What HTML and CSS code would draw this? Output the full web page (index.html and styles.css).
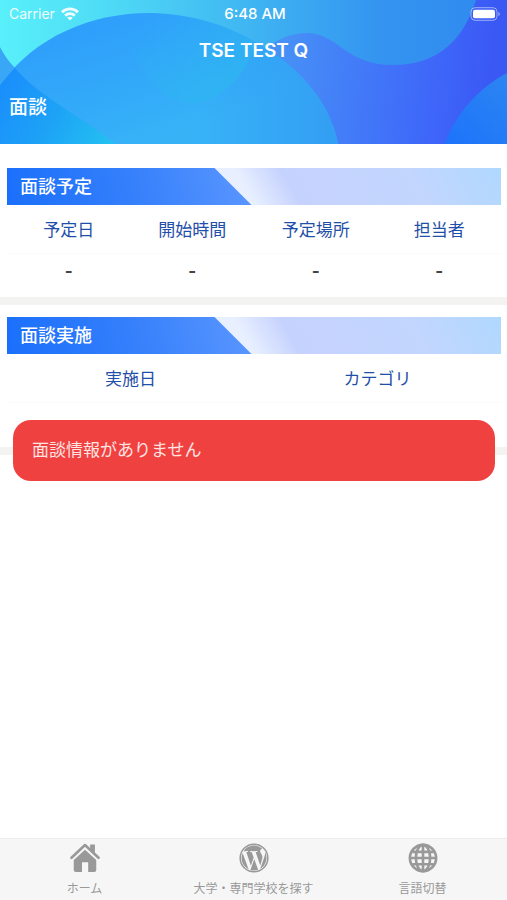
FILE: index.html
```
<!DOCTYPE html>
<html lang="ja">
<head>
    <meta charset="utf-8">
    <meta name="viewport" content="width=device-width, initial-scale=1">
    <title>面談 - TSE TEST Q</title>
    <link rel="stylesheet" href="styles.css">
</head>
<body>
    <header class="app-header">
        <!-- Wave background -->
        <svg class="header-bg" viewBox="0 0 507 144" preserveAspectRatio="none" aria-hidden="true">
            <defs>
                <linearGradient id="bgBase" x1="0" y1="0" x2="507" y2="0" gradientUnits="userSpaceOnUse">
                    <stop offset="0" stop-color="#58f0fa"/><stop offset="0.2" stop-color="#4fdcf6"/>
                    <stop offset="0.5" stop-color="#3fb4f2"/><stop offset="0.75" stop-color="#3494f0"/><stop offset="1" stop-color="#2f88ee"/>
                </linearGradient>
                <linearGradient id="bgHill" x1="100" y1="20" x2="140" y2="144" gradientUnits="userSpaceOnUse">
                    <stop offset="0" stop-color="#2e9ffb"/><stop offset="1" stop-color="#37b2f7"/>
                </linearGradient>
                <linearGradient id="bgFade" x1="200" y1="0" x2="330" y2="0" gradientUnits="userSpaceOnUse">
                    <stop offset="0" stop-color="#339ff4" stop-opacity="0"/><stop offset="1" stop-color="#339ff4"/>
                </linearGradient>
                <linearGradient id="bgGlow" x1="140" y1="30" x2="220" y2="110" gradientUnits="userSpaceOnUse">
                    <stop offset="0" stop-color="#2cb4f0" stop-opacity="0"/><stop offset="1" stop-color="#2cb8f0" stop-opacity="0.7"/>
                </linearGradient>
                <linearGradient id="bgCorner" x1="0" y1="80" x2="110" y2="144" gradientUnits="userSpaceOnUse">
                    <stop offset="0" stop-color="#1a8dfc"/><stop offset="0.5" stop-color="#1da2f6"/><stop offset="1" stop-color="#24c0f1"/>
                </linearGradient>
                <linearGradient id="bgWave" x1="280" y1="60" x2="490" y2="80" gradientUnits="userSpaceOnUse">
                    <stop offset="0" stop-color="#4791f6"/><stop offset="0.4" stop-color="#4279f8"/><stop offset="0.75" stop-color="#3e66f9"/><stop offset="1" stop-color="#3a59f4"/>
                </linearGradient>
                <linearGradient id="bgRight" x1="450" y1="144" x2="507" y2="80" gradientUnits="userSpaceOnUse">
                    <stop offset="0" stop-color="#1e74fb"/><stop offset="1" stop-color="#2b84f2"/>
                </linearGradient>
            </defs>
            <rect width="507" height="144" fill="url(#bgBase)"/>
            <path fill="url(#bgWave)" d="M270 46C282 36 296 33 308 33C338 34 346 65 393 65C440 65 464 38 476 0H507V144H270Z"/>
            <path fill="url(#bgRight)" d="M445 144C454 116 478 88 507 73V144Z"/>
            <path fill="#3aa6f6" d="M0 47C4 55 9 62 15 68L0 85Z"/>
            <path fill="url(#bgHill)" d="M0 85C35 36 92 13 150 13C196 14 232 27 264 47C302 71 330 103 338 144H0Z"/>
            <path fill="url(#bgFade)" d="M150 13C196 14 232 27 264 47C302 71 330 103 338 144H150Z"/>
            <path fill="url(#bgGlow)" d="M150 13C190 14 224 24 254 41C254 62 226 103 190 103C158 102 138 68 110 17C124 14 136 13 150 13Z"/>
            <path fill="url(#bgCorner)" d="M15 68C40 98 82 116 115 144H0V85C5 79 10 73 15 68Z"/>
        </svg>

        <div class="status-bar">
            <span class="carrier">Carrier
                <svg class="wifi" viewBox="0 0 18 14" aria-hidden="true">
                    <g fill="none" stroke="#fff" stroke-width="2.8">
                        <path d="M1 5.2C5.5 0.8 12.5 0.8 17 5.2"/>
                        <path d="M4.1 8.6C6.9 6 11.1 6 13.9 8.6"/>
                    </g>
                    <path fill="#fff" d="M9 13.6L6.1 10.7C7.7 9.3 10.3 9.3 11.9 10.7Z"/>
                </svg>
            </span>
            <span class="clock">6:48 AM</span>
            <svg class="battery" viewBox="0 0 31 14" role="img" aria-label="Battery full">
                <rect x="1" y="0.7" width="26" height="12.6" rx="4" fill="none" stroke="#fff" stroke-opacity="0.5"/>
                <rect x="3" y="2.7" width="22" height="8.6" rx="2" fill="#fff"/>
                <path d="M28.4 5C30.4 5.8 30.4 8.2 28.4 9Z" fill="#fff" fill-opacity="0.5"/>
            </svg>
        </div>
        <div class="app-title">TSE TEST Q</div>
        <h1 class="page-title">面談</h1>
    </header>

    <main class="content">
        <section class="panel">
            <h2 class="banner">面談予定</h2>
            <table class="info-table">
                <thead>
                    <tr><th>予定日</th><th>開始時間</th><th>予定場所</th><th>担当者</th></tr>
                </thead>
                <tbody>
                    <tr><td>-</td><td>-</td><td>-</td><td>-</td></tr>
                </tbody>
            </table>
        </section>

        <section class="panel">
            <h2 class="banner">面談実施</h2>
            <table class="info-table">
                <thead>
                    <tr><th>実施日</th><th>カテゴリ</th></tr>
                </thead>
            </table>
            <div class="toast-anchor">
                <div class="toast" role="alert">面談情報がありません</div>
            </div>
        </section>
    </main>

    <nav class="tab-bar">
        <a href="#home" class="tab">
            <svg viewBox="0 0 32 32" aria-hidden="true">
                <path d="M21.6 2H26.4V11.4L21.6 7Z"/>
                <path d="M16 7.2L28 18V28.8Q28 31 25.8 31H19.4V20.4H12.8V31H6.2Q4 31 4 28.8V18Z"/>
                <path d="M1.6 16.2L16 2.6L30.4 16.2" fill="none" stroke="#f6f6f6" stroke-width="4.6" stroke-linejoin="round"/>
                <path d="M1.6 15.8L16 2.2L30.4 15.8" fill="none" stroke="#999" stroke-width="2.8" stroke-linecap="round" stroke-linejoin="round"/>
                <path d="M21.6 1.6H26.4V11L21.6 6.6Z"/>
            </svg>
            <span>ホーム</span>
        </a>
        <a href="#schools" class="tab">
            <svg viewBox="0 0 512 512" aria-hidden="true">
                <path d="M61.7 169.4l101.5 278C92.2 413 43.3 340.2 43.3 256c0-30.9 6.6-60.1 18.4-86.6zm337.9 75.9c0-26.3-9.4-44.5-17.5-58.7-10.8-17.5-20.9-32.4-20.9-49.9 0-19.6 14.8-37.8 35.7-37.8.9 0 1.8.1 2.8.2-37.9-34.7-88.3-55.9-143.7-55.9-74.3 0-139.7 38.1-177.8 95.9 5 .2 9.7.3 13.7.3 22.2 0 56.7-2.7 56.7-2.7 11.5-.7 12.8 16.2 1.4 17.5 0 0-11.5 1.3-24.3 2l77.5 230.4L249.8 247l-33.1-90.8c-11.5-.7-22.3-2-22.3-2-11.5-.7-10.1-18.2 1.3-17.5 0 0 35.1 2.7 56 2.7 22.2 0 56.7-2.7 56.7-2.7 11.5-.7 12.8 16.2 1.4 17.5 0 0-11.5 1.3-24.3 2l76.9 228.7 21.2-70.9c9-29.4 16-50.5 16-68.7zm-139.9 29.3l-63.8 185.5c19.1 5.6 39.2 8.7 60.1 8.7 24.8 0 48.5-4.3 70.6-12.1-.6-.9-1.1-1.9-1.5-2.9l-65.4-179.2zm183-120.7c.9 6.8 1.4 14 1.4 21.9 0 21.6-4 45.8-16.2 76.2l-65 187.9C426.2 403 468.7 334.5 468.7 256c0-37-9.4-71.8-26-102.1z"/>
                <circle cx="256" cy="256" r="236" fill="none" stroke="#999" stroke-width="26"/>
            </svg>
            <span>大学・専門学校を探す</span>
        </a>
        <a href="#language" class="tab">
            <svg viewBox="0 0 32 32" aria-hidden="true">
                <g fill="none" stroke="#999" stroke-width="2.8">
                    <circle cx="16" cy="16" r="14"/>
                    <ellipse cx="16" cy="16" rx="7.6" ry="14"/>
                    <path d="M16 2V30M2 16H30M4.5 9.4H27.5M4.5 22.6H27.5"/>
                </g>
            </svg>
            <span>言語切替</span>
        </a>
    </nav>
</body>
</html>
```

FILE: styles.css
```
/* --- Base styles --- */
* { box-sizing: border-box; }
body {
    margin: 0;
    min-height: 100vh;
    display: flex;
    flex-direction: column;
    background-color: #fff;
    font-family: Inter, "Noto Sans CJK JP", sans-serif;
}
h1, h2 { margin: 0; }

/* --- Header --- */
.app-header { position: relative; color: #fff; padding-bottom: 22px; }
.header-bg { position: absolute; top: 0; left: 0; width: 100%; height: 100%; z-index: -1; }
.status-bar {
    display: grid;
    grid-template-columns: 1fr auto 1fr;
    align-items: center;
    height: 27px;
    padding: 0 6px 0 9px;
    font-size: 14px;
}
.carrier { display: flex; align-items: center; gap: 6px; opacity: 0.9; }
.wifi { width: 18px; height: 14px; }
.clock { font-size: 15px; font-weight: 500; }
.battery { width: 31px; height: 14px; justify-self: end; }
.app-title { font-size: 19px; line-height: 24px; font-weight: 600; text-align: center; padding-top: 12px; }
.page-title { font-size: 19px; line-height: 28px; font-weight: 500; padding: 31px 9px 0; }

/* --- Panels --- */
.content { flex: 1; padding-top: 12px; }
.panel { padding: 12px 6px 0 7px; border-bottom: 8px solid #f3f3f2; }
.banner {
    position: relative;
    height: 37px;
    padding-left: 13px;
    font-size: 18px;
    line-height: 38px;
    font-weight: 500;
    color: #fff;
    background: linear-gradient(60deg, #e8f0ff 48%, #c6d2fe 57%, #c2d6fe 82%, #b0d8fe 100%);
    z-index: 0;
}
/* Slanted blue part of the banner */
.banner::before {
    content: "";
    position: absolute;
    inset: 0;
    z-index: -1;
    background: linear-gradient(75deg, #1a6ffb, #347ffb 25%, #5a96ff 50%);
    clip-path: polygon(0 0, 42% 0, calc(42% + 37px) 100%, 0 100%);
}
.info-table { width: 100%; border-collapse: collapse; table-layout: fixed; }
.info-table th {
    height: 48px;
    padding: 0;
    font-size: 17px;
    font-weight: 400;
    color: #1f4fa8;
    border-bottom: 1px solid #fafafa;
}
.info-table td { height: 44px; padding: 0 0 8px; font-size: 17px; font-weight: 700; text-align: center; color: #444; }

/* --- Toast --- */
.toast-anchor { position: relative; height: 44px; }
.toast {
    position: absolute;
    top: 17px;
    left: 6px;
    right: 6px;
    padding: 18px 19px;
    border-radius: 18px;
    background-color: #f04141;
    color: #ffe4e2;
    font-size: 17px;
    line-height: 25px;
}

/* --- Tab bar --- */
.tab-bar { display: flex; background-color: #f6f6f6; border-top: 1px solid #ececec; }
.tab {
    flex: 1;
    display: flex;
    flex-direction: column;
    align-items: center;
    gap: 6px;
    padding: 4px 0 1px;
    font-size: 12px;
    line-height: 20px;
    color: #999;
    text-decoration: none;
    white-space: nowrap;
}
.tab svg { width: 30px; height: 30px; fill: #999; }
```
